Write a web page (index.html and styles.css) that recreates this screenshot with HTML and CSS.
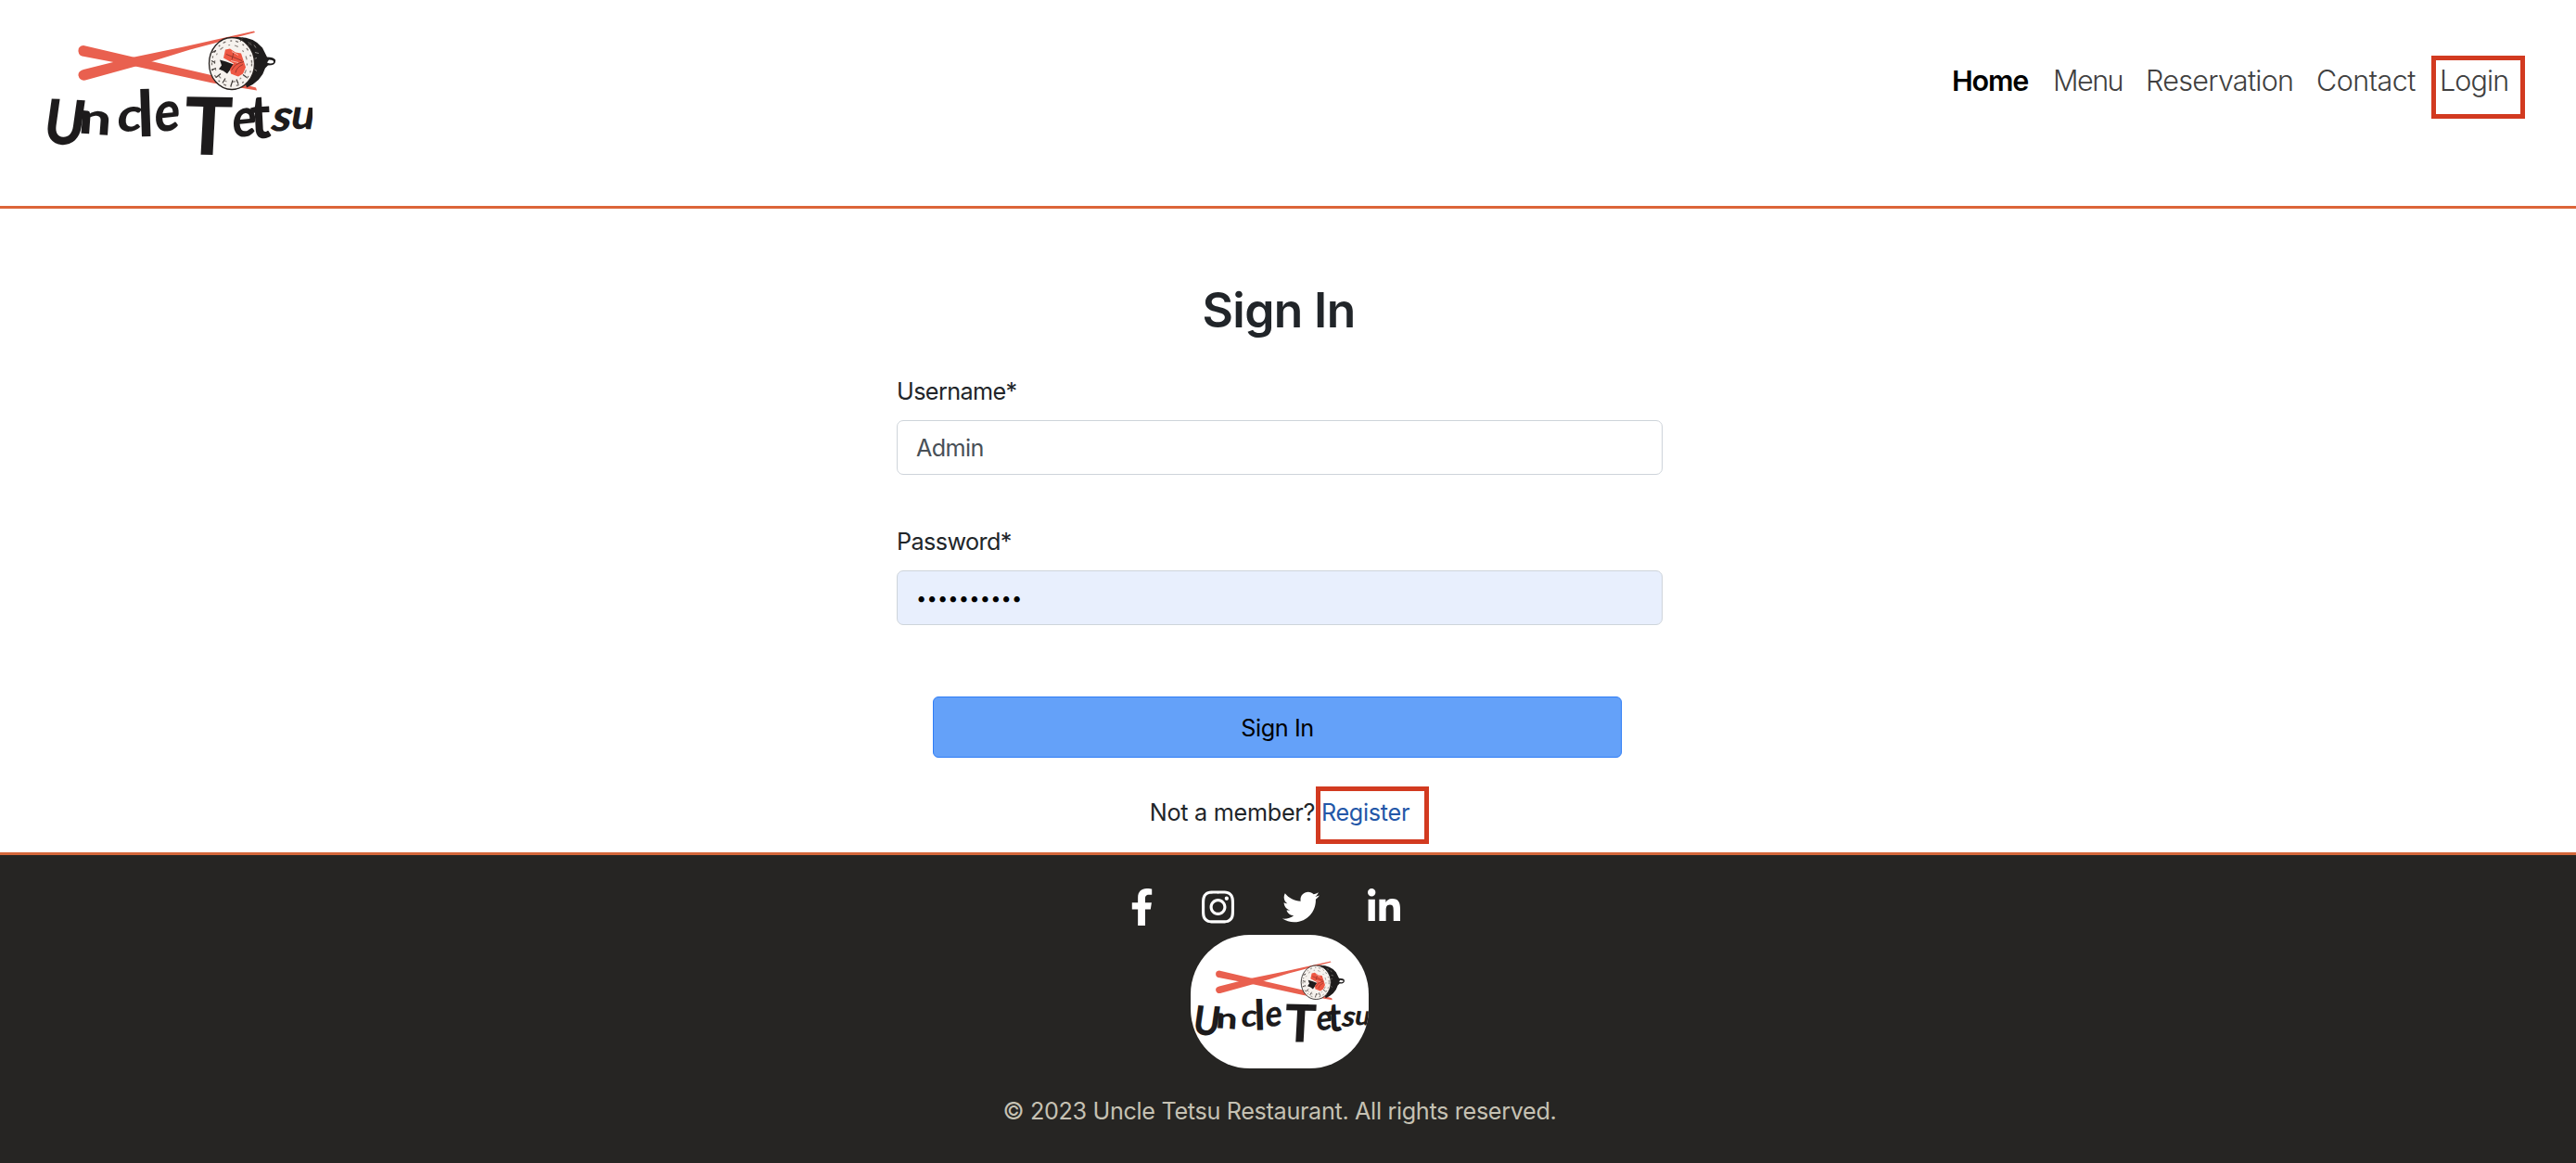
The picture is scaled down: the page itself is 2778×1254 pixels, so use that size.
FILE: index.html
```
<!DOCTYPE html>
<html lang="en">
<head>
<meta charset="utf-8">
<title>Uncle Tetsu - Sign In</title>
<link rel="stylesheet" href="styles.css">
</head>
<body>
<svg class="defs" width="0" height="0" aria-hidden="true">
  <symbol id="brand" viewBox="43 -10.5 294 220.5">
    <rect x="43" y="-10.5" width="294" height="220.5" fill="#fff"/>
    <g fill="#e9604f">
      <path d="M90 48.500 Q84 49 84.500 55 Q85 60 91 60.500 L146 71 L229 89 L277 97 L276 94 L230 81 L165 66 Z"/>
      <path d="M90 74.500 Q84 76 84.500 81 Q86 87 92 86 L150 70 L205 53 L275 34.500 L274 33 L198 50 L140 62 Z"/>
    </g>
    <path d="M250 40 Q272 37 283 51 L288 61 Q295 61 297 64 Q298 70 289 70 L286 73 Q282 87 266 94 Z" fill="#1e1c1c"/>
    <path d="M290 64 Q296 64 295 67 Q292 69 288 67" fill="#fff"/>
    <path d="M268 45 l3 3 m3 0 l2 3 m-1 5 l4 1 m-5 6 l3 -1 m-3 12 l3 2" stroke="#8b8784" stroke-width="1"/>
    <ellipse cx="250" cy="68" rx="24.500" ry="28" fill="#f6f2ee" stroke="#26211f" stroke-width="1.300"/>
    <ellipse cx="250" cy="68" rx="21.500" ry="24.500" fill="none" stroke="#77706c" stroke-width="1.300" stroke-dasharray="3 5 2 4"/>
    <ellipse cx="249" cy="68" rx="17.500" ry="20" fill="none" stroke="#8f8883" stroke-width="1.200" stroke-dasharray="2 5 4 6"/>
    <path d="M229 56 l4 -2 m-5 11 l4 2 m-4 8 l5 -2 m0 10 l5 -4 m2 10 l3 -5 m6 8 l2 -6 m6 4 l-2 -5 m11 -2 l-4 -3 m9 -35 l-4 4 m-5 -9 l-3 4" stroke="#3b3633" stroke-width="1.200"/>
    <path d="M237 64 L244 66 L252 69 L248 75 L245 79 L241 76 L236 74 L239 70 Z" fill="#1e1c1c"/>
    <path d="M243 53 L248 52 L254 56 L260 57 L263 66 L265 72 L262 79 L257 82 L249 79 L248 74 L252 68 L241 62 Z" fill="#ee5743"/>
    <path d="M244 58 l17 7 m-11 10 q3 -7 13 -9 m-9 12 q1 -6 8 -9 M252 56 l-2 8" stroke="#8e342b" stroke-width=".9" fill="none"/>
    <path d="M250 55 l7 4 M249 65 l8 2" stroke="#f6b3a6" stroke-width="1"/>
    <g class="brush">
      <text transform="translate(45 154) rotate(3) skewX(-5) scale(.88 1)" font-size="67">U</text>
      <text transform="translate(84 143) rotate(4) scale(1.3 1)" font-size="48">n</text>
      <text transform="translate(125 142) rotate(-4) skewX(-10) scale(1.1 1)" font-size="50">c</text>
      <text transform="translate(149 147) rotate(-2)" font-size="69">l</text>
      <text transform="translate(166 142) rotate(-6) skewX(-8) scale(.86 1)" font-size="60">e</text>
      <text transform="translate(197 166) rotate(1) skewX(-2)" font-size="86">T</text>
      <text transform="translate(250 148) rotate(-6) skewX(-8) scale(.84 1)" font-size="58">e</text>
      <text transform="translate(271 149) rotate(-3) scale(.88 1)" font-size="66">t</text>
      <text transform="translate(290 140) rotate(4) skewX(-12)" font-size="48">s</text>
      <text transform="translate(312 138) rotate(2) skewX(-8)" font-size="45">u</text>
    </g>
  </symbol>
</svg>

<header class="header">
  <a class="logo"><svg class="logo-mark"><use href="#brand"/></svg></a>
  <nav class="nav">
    <a class="nav-link home active">Home</a>
    <a class="nav-link menu">Menu</a>
    <a class="nav-link reservation">Reservation</a>
    <a class="nav-link contact">Contact</a>
    <a class="nav-link login">Login<span class="mark"></span></a>
  </nav>
</header>

<main class="main">
  <form class="form">
    <h1 class="title">Sign In</h1>
    <label class="label" for="user">Username*</label>
    <input class="field" id="user" type="text" value="Admin">
    <label class="label second" for="pass">Password*</label>
    <input class="field filled" id="pass" type="password" value="adminadmin">
    <button class="submit" type="button">Sign In</button>
    <p class="join">Not a member? <a class="register">Register<span class="mark"></span></a></p>
  </form>
</main>

<footer class="footer">
  <div class="social">
    <svg width="25" height="40" viewBox="0 0 320 512"><path d="M279.140 288l14.220-92.660h-88.910v-60.130c0-25.350 12.420-50.060 52.240-50.060h40.420V6.260S260.430 0 225.360 0c-73.220 0-121.080 44.380-121.080 124.720v70.620H22.890V288h81.390v224h100.170V288z"/></svg>
    <svg width="35" height="40" viewBox="0 0 448 512"><path d="M224.100 141c-63.600 0-114.900 51.300-114.900 114.900s51.300 114.900 114.900 114.900S339 319.500 339 255.900 287.700 141 224.100 141zm0 189.600c-41.100 0-74.700-33.500-74.700-74.700s33.500-74.700 74.700-74.700 74.700 33.500 74.700 74.700-33.600 74.700-74.700 74.700zm146.400-194.300c0 14.900-12 26.800-26.800 26.800-14.900 0-26.800-12-26.800-26.800s12-26.800 26.800-26.800 26.800 12 26.800 26.800zm76.100 27.200c-1.700-35.900-9.900-67.700-36.200-93.900-26.200-26.200-58-34.400-93.900-36.200-37-2.100-147.900-2.100-184.900 0-35.800 1.700-67.600 9.900-93.900 36.100s-34.400 58-36.200 93.900c-2.100 37-2.100 147.900 0 184.900 1.700 35.900 9.900 67.700 36.200 93.900s58 34.400 93.900 36.200c37 2.100 147.900 2.100 184.900 0 35.900-1.700 67.700-9.900 93.900-36.200 26.200-26.200 34.400-58 36.200-93.900 2.100-37 2.100-147.800 0-184.800zM398.800 388c-7.800 19.600-22.900 34.700-42.600 42.600-29.500 11.700-99.500 9-132.100 9s-102.700 2.600-132.100-9c-19.600-7.800-34.700-22.900-42.600-42.600-11.700-29.500-9-99.500-9-132.100s-2.600-102.700 9-132.100c7.800-19.600 22.900-34.700 42.600-42.600 29.500-11.700 99.500-9 132.100-9s102.700-2.600 132.100 9c19.600 7.800 34.700 22.900 42.600 42.600 11.700 29.500 9 99.500 9 132.100s2.700 102.700-9 132.100z"/></svg>
    <svg width="40" height="40" viewBox="0 0 512 512"><path d="M459.370 151.716c.325 4.548.325 9.097.325 13.645 0 138.720-105.583 298.558-298.558 298.558-59.452 0-114.680-17.219-161.137-47.106 8.447.974 16.568 1.299 25.340 1.299 49.055 0 94.213-16.568 130.274-44.832-46.132-.975-84.792-31.188-98.112-72.772 6.498.974 12.995 1.624 19.818 1.624 9.421 0 18.843-1.300 27.614-3.573-48.081-9.747-84.143-51.980-84.143-102.985v-1.299c13.969 7.797 30.214 12.670 47.431 13.319-28.264-18.843-46.781-51.005-46.781-87.391 0-19.492 5.197-37.360 14.294-52.954 51.655 63.675 129.300 105.258 216.365 109.807-1.624-7.797-2.599-15.918-2.599-24.040 0-57.828 46.782-104.934 104.934-104.934 30.213 0 57.502 12.670 76.670 33.137 23.715-4.548 46.456-13.320 66.599-25.340-7.798 24.366-24.366 44.833-46.132 57.827 21.117-2.273 41.584-8.122 60.426-16.243-14.292 20.791-32.161 39.308-52.628 54.253z"/></svg>
    <svg width="35" height="40" viewBox="0 0 448 512"><path d="M100.280 448H7.400V148.900h92.880zM53.790 108.100C24.090 108.100 0 83.500 0 53.800a53.790 53.790 0 0 1 107.580 0c0 29.700-24.100 54.300-53.790 54.300zM447.900 448h-92.680V302.400c0-34.700-.7-79.200-48.290-79.200-48.290 0-55.690 37.700-55.690 76.700V448h-92.780V148.900h89.080v40.800h1.300c12.400-23.500 42.690-48.300 87.880-48.300 94 0 111.280 61.900 111.280 142.300V448z"/></svg>
  </div>
  <svg class="badge"><use href="#brand"/></svg>
  <p class="copyright">© 2023 Uncle Tetsu Restaurant. All rights reserved.</p>
</footer>
</body>
</html>
```
FILE: styles.css
```
* { box-sizing: border-box; }

body {
  margin: 0;
  width: 2778px;
  height: 1254px;
  overflow: hidden;
  display: flex;
  flex-direction: column;
  background: #fff;
  color: #212529;
  font-family: Inter, "Liberation Sans", sans-serif;
  font-size: 25.2px;
}

.defs { display: block; flex: none; }

.brush {
  font-family: Lato, sans-serif;
  font-weight: 900;
  fill: #1d1b1c;
}

.header {
  flex: none;
  display: flex;
  justify-content: space-between;
  align-items: flex-start;
  height: 225px;
  padding-left: 43px;
  border-bottom: 3px solid #dc6539;
}

.logo { display: flex; height: 210px; align-items: flex-end; overflow: hidden; }
.logo-mark { flex: none; width: 294px; height: 220.5px; }

.nav {
  display: flex;
  padding-top: 66px;
  font-size: 30.5px;
  font-weight: 300;
  line-height: 41px;
  color: #404040;
}
.nav-link { white-space: nowrap; }
.home { width: 109px; letter-spacing: -1.2px; }
.menu { width: 100px; letter-spacing: -1.5px; }
.reservation { width: 184px; letter-spacing: -.72px; }
.contact { width: 133px; letter-spacing: -.53px; }
.login { width: 147px; letter-spacing: -.9px; position: relative; }
.active { font-weight: 600; color: #000; }

.mark { position: absolute; border: 5px solid #d23a20; }
.login .mark { left: -9px; top: -6px; width: 101px; height: 68px; }

.main {
  flex: none;
  height: 694px;
  padding-top: 79px;
}
.form {
  display: flex;
  flex-direction: column;
  width: 826px;
  margin: 0 auto 0 967px;
}
.title {
  margin: 0 0 39px;
  padding-right: 2px;
  font-size: 51.5px;
  font-weight: 600;
  line-height: 60px;
  letter-spacing: -.6px;
  text-align: center;
}
.label {
  margin-bottom: 12px;
  line-height: 38px;
  letter-spacing: -.6px;
}
.second { margin-top: 53px; }
.field {
  height: 59px;
  padding: 0 20px;
  border: 1px solid #ced4da;
  border-radius: 7px;
  background: #fff;
  color: #495057;
  font: inherit;
  letter-spacing: -.6px;
}
.filled {
  background: #e8effd;
  color: #000;
  font-size: 20px;
  letter-spacing: .2px;
}
.submit {
  width: 743px;
  height: 66px;
  margin: 77px 0 0 39px;
  padding: 1px 0 0;
  border: 1px solid #2f7df6;
  border-radius: 6px;
  background: #64a1f9;
  color: #000;
  font: inherit;
  letter-spacing: -.4px;
}
.join {
  margin: 40px 0 0;
  line-height: 38px;
  letter-spacing: -.28px;
  text-align: center;
}
.register { position: relative; color: #2357a8; }
.register .mark { left: -6px; top: -13px; width: 122px; height: 62px; }

.footer {
  flex: 1;
  display: flex;
  flex-direction: column;
  align-items: center;
  padding: 36px 18px 0 0;
  border-top: 3px solid #d4673a;
  background: #262523;
}
.social {
  display: flex;
  gap: 52px;
  padding-right: 32px;
  fill: #fff;
}
.badge {
  width: 192px;
  height: 144px;
  margin: 10px 0 0;
  border-radius: 64px;
}
.copyright {
  margin: 26px 0 0;
  color: #c5c1b3;
  line-height: 40px;
  letter-spacing: -.33px;
}
```
